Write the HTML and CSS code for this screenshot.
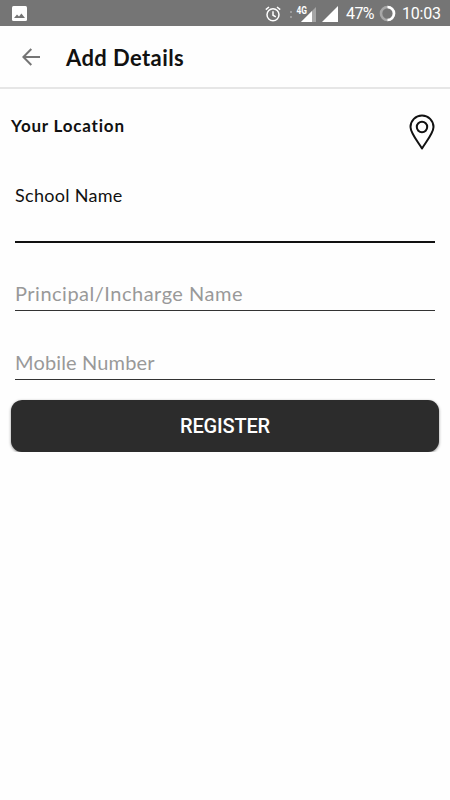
FILE: index.html
```html
<!DOCTYPE html>
<html lang="en">

<head>
    <meta charset="UTF-8">
    <meta name="viewport" content="width=device-width, initial-scale=1.0">
    <title>Add Details</title>
    <link rel="stylesheet" href="styles.css">
</head>

<body>
    <!-- status bar -->
    <div class="status-bar">
        <svg class="picture" width="15" height="15" viewBox="0 0 15 15">
            <rect width="15" height="15" rx="1.5" fill="#fff"/>
            <path d="M2 12l3-3.6 2 2.2 2.4-3.2 3.6 4.6z" fill="#757575"/>
        </svg>
        <svg class="alarm" width="16" height="16" viewBox="0 0 16 16" fill="none" stroke="#fff" stroke-width="1.5">
            <circle cx="8" cy="8.8" r="6"/>
            <path d="M8 5.2v4l2.8 1.6M.8 3.6L4 1M15.2 3.6L12 1"/>
        </svg>
        <svg class="signal" width="27" height="16" viewBox="0 0 27 16">
            <path d="M0 5h2v2H0zM0 10h2v2H0z" fill="#9c9c9c"/>
            <path d="M26 1v15H11z" fill="#a5a5a5"/>
            <path d="M22 5v11H11z" fill="#fff"/>
            <path d="M6 0h11v9H6z" fill="#757575"/>
            <text x="6.500" y="8" class="net" textLength="10.500" lengthAdjust="spacingAndGlyphs">4G</text>
        </svg>
        <svg class="signal-full" width="16" height="16" viewBox="0 0 16 16">
            <path d="M16 0v16H0z" fill="#fff"/>
        </svg>
        <span class="percent">47%</span>
        <svg class="battery" width="17" height="17" viewBox="0 0 17 17" fill="none" stroke-width="2.6">
            <circle cx="8.5" cy="8.5" r="6.5" stroke="#a8a8a8"/>
            <path d="M8.5 2a6.5 6.5 0 0 1 0 13" stroke="#fff"/>
        </svg>
        <span class="clock">10:03</span>
    </div>

    <header class="toolbar">
        <svg width="18" height="18" viewBox="0 0 18 18" fill="none" stroke="#757575" stroke-width="2">
            <path d="M18 9H1.5M9.3 1L1.4 9l7.9 8"/>
        </svg>
        <h1>Add Details</h1>
    </header>

    <main>
        <div class="location">
            <h2>Your Location</h2>
            <svg width="26" height="37" viewBox="0 0 26 37" fill="none" stroke="#111" stroke-width="2">
                <path d="M13 34.5C9 28 1.5 19 1.5 13a11.5 11.5 0 0 1 23 0C24.5 19 17 28 13 34.5z" stroke-linejoin="round"/>
                <circle cx="13" cy="13" r="5.2"/>
            </svg>
        </div>

        <form>
            <div class="form-item school">
                <label for="school">School Name</label>
                <input type="text" id="school">
            </div>
            <div class="form-item principal">
                <input type="text" placeholder="Principal/Incharge Name">
            </div>
            <div class="form-item mobile">
                <input type="text" placeholder="Mobile Number">
            </div>
            <button type="button">REGISTER</button>
        </form>
    </main>
</body>

</html>
```
FILE: styles.css
```css
* {
    box-sizing: border-box;
}

body {
    margin: 0;
    background: #fefefe;
    color: #111;
    font-family: Lato, sans-serif;
}

svg {
    display: block;
    flex: none;
}

/* status bar */
.status-bar {
    display: flex;
    align-items: center;
    height: 26px;
    padding: 1px 9px 0 12px;
    background: #757575;
    color: #fff;
    font: 16px/26px Roboto, sans-serif;
}

.alarm {
    margin-left: auto;
}

.signal {
    margin-left: 9px;
}

.net {
    fill: #fff;
    font: bold 10px Roboto, sans-serif;
}

.signal-full {
    margin-left: 5px;
}

.percent {
    width: 29px;
    margin-left: 8px;
    letter-spacing: -0.6px;
    white-space: nowrap;
}

.battery {
    margin-left: 4px;
}

.clock {
    width: 39px;
    margin-left: 6px;
    letter-spacing: -0.2px;
    white-space: nowrap;
}

/* toolbar */
.toolbar {
    display: flex;
    align-items: center;
    height: 63px;
    padding-left: 22px;
    border-bottom: 2px solid #e6e6e6;
}

.toolbar h1 {
    margin: 2px 0 0 26px;
    font-size: 22px;
    font-weight: bold;
    line-height: 28px;
    letter-spacing: 0.4px;
}

/* form */
main {
    padding: 0 11px;
}

.location {
    display: flex;
    justify-content: space-between;
    padding: 25px 4px 0 0;
}

.location h2 {
    margin: 1px 0 0;
    font-size: 17px;
    font-weight: bold;
    line-height: 22px;
    letter-spacing: 0.8px;
}

.form-item {
    margin: 0 4px;
}

.form-item label {
    display: block;
    font-size: 18px;
    line-height: 24px;
    letter-spacing: 0.3px;
}

.form-item input {
    display: block;
    width: 100%;
    height: 35px;
    padding: 0;
    border: 0;
    border-bottom: 1px solid #333;
    border-radius: 0;
    background: none;
    font: 20px Lato, sans-serif;
    letter-spacing: 0.5px;
    outline: none;
}

.form-item input::placeholder {
    color: #999;
}

.school {
    padding-top: 32px;
}

.school input {
    height: 36px;
    border-bottom: 2px solid #111;
}

.principal {
    padding-top: 33px;
}

.mobile {
    padding-top: 34px;
}

.mobile input {
    letter-spacing: 0.15px;
}

button {
    display: block;
    width: 100%;
    height: 52px;
    margin-top: 20px;
    padding: 0;
    border: 0;
    border-radius: 11px;
    background: #2c2c2c;
    box-shadow: 0 1px 3px rgba(0, 0, 0, 0.45);
    color: #fff;
    font: 500 20px Roboto, sans-serif;
    letter-spacing: -0.2px;
}
```
